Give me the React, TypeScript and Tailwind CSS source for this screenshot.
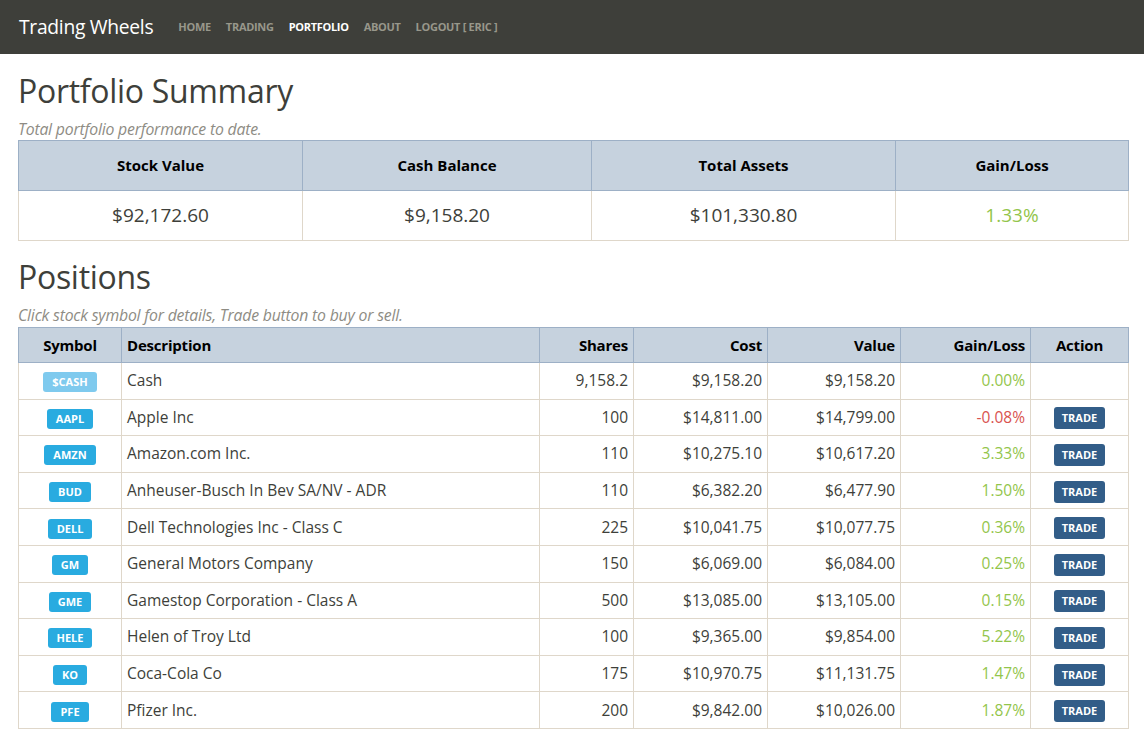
import React from 'react'

type Position = {
  symbol: string
  description: string
  shares: string
  cost: string
  value: string
  gain: string
  loss?: boolean
  cash?: boolean
}

const positions: Position[] = [
  { symbol: '$CASH', description: 'Cash', shares: '9,158.2', cost: '$9,158.20', value: '$9,158.20', gain: '0.00%', cash: true },
  { symbol: 'AAPL', description: 'Apple Inc', shares: '100', cost: '$14,811.00', value: '$14,799.00', gain: '-0.08%', loss: true },
  { symbol: 'AMZN', description: 'Amazon.com Inc.', shares: '110', cost: '$10,275.10', value: '$10,617.20', gain: '3.33%' },
  { symbol: 'BUD', description: 'Anheuser-Busch In Bev SA/NV - ADR', shares: '110', cost: '$6,382.20', value: '$6,477.90', gain: '1.50%' },
  { symbol: 'DELL', description: 'Dell Technologies Inc - Class C', shares: '225', cost: '$10,041.75', value: '$10,077.75', gain: '0.36%' },
  { symbol: 'GM', description: 'General Motors Company', shares: '150', cost: '$6,069.00', value: '$6,084.00', gain: '0.25%' },
  { symbol: 'GME', description: 'Gamestop Corporation - Class A', shares: '500', cost: '$13,085.00', value: '$13,105.00', gain: '0.15%' },
  { symbol: 'HELE', description: 'Helen of Troy Ltd', shares: '100', cost: '$9,365.00', value: '$9,854.00', gain: '5.22%' },
  { symbol: 'KO', description: 'Coca-Cola Co', shares: '175', cost: '$10,970.75', value: '$11,131.75', gain: '1.47%' },
  { symbol: 'PFE', description: 'Pfizer Inc.', shares: '200', cost: '$9,842.00', value: '$10,026.00', gain: '1.87%' },
]

const navLinks = ['HOME', 'TRADING', 'PORTFOLIO', 'ABOUT', 'LOGOUT [ ERIC ]']

const th = 'border border-[#9db0c6] bg-[#c6d2de] font-bold text-black'
const td = 'border border-[#dfd7ca]'

function Navbar() {
  return (
    <nav className="flex h-[54px] items-center bg-[#3e3f3a] pl-[19px]">
      <span className="mr-[25px] text-[19.3px] tracking-[-0.3px] text-white">Trading Wheels</span>
      <div className="flex gap-[15px] pt-[1px]">
        {navLinks.map((l) => (
          <span
            key={l}
            className={
              'text-[11px] font-bold tracking-[-0.3px] ' +
              (l === 'PORTFOLIO' ? 'text-white' : 'text-[#98978b]')
            }
          >
            {l}
          </span>
        ))}
      </div>
    </nav>
  )
}

function SectionHead({ title, sub }: { title: string; sub: string }) {
  return (
    <>
      <h1 className="text-[32px] leading-[38px] tracking-[-0.3px] text-[#3e3f3a]">{title}</h1>
      <p className="mt-[9px] text-[15.8px] italic leading-[20px] tracking-[-0.2px] text-[#8e8c84]">{sub}</p>
    </>
  )
}

function Summary() {
  return (
    <table className="mt-[1px] w-[1110px] table-fixed border-collapse text-center">
      <colgroup>
        <col className="w-[284px]" />
        <col className="w-[289px]" />
        <col className="w-[304px]" />
        <col className="w-[233px]" />
      </colgroup>
      <thead>
        <tr className="h-[50px] text-[15px]">
          <th className={th}>Stock Value</th>
          <th className={th}>Cash Balance</th>
          <th className={th}>Total Assets</th>
          <th className={th}>Gain/Loss</th>
        </tr>
      </thead>
      <tbody>
        <tr className="h-[50px] text-[19px] text-[#3e3f3a]">
          <td className={td}>$92,172.60</td>
          <td className={td}>$9,158.20</td>
          <td className={td}>$101,330.80</td>
          <td className={td + ' text-[#93c54b]'}>1.33%</td>
        </tr>
      </tbody>
    </table>
  )
}

function Positions() {
  return (
    <table className="mt-[2px] w-[1110px] table-fixed border-collapse text-[15.5px] text-[#3e3f3a]">
      <colgroup>
        <col className="w-[103px]" />
        <col className="w-[418px]" />
        <col className="w-[94px]" />
        <col className="w-[134px]" />
        <col className="w-[133px]" />
        <col className="w-[130px]" />
        <col className="w-[98px]" />
      </colgroup>
      <thead>
        <tr className="h-[35px] text-[15px] tracking-[-0.2px]">
          <th className={th + ' text-center'}>Symbol</th>
          <th className={th + ' pl-[5px] text-left'}>Description</th>
          <th className={th + ' pr-[5px] text-right'}>Shares</th>
          <th className={th + ' pr-[5px] text-right'}>Cost</th>
          <th className={th + ' pr-[5px] text-right'}>Value</th>
          <th className={th + ' pr-[5px] text-right'}>Gain/Loss</th>
          <th className={th + ' text-center'}>Action</th>
        </tr>
      </thead>
      <tbody>
        {positions.map((p) => (
          <tr key={p.symbol} className="h-[36.6px]">
            <td className={td + ' text-center'}>
              <span
                className={
                  'inline-block rounded-[3px] px-[9px] py-[3px] text-[11px] font-bold leading-[14px] text-white ' +
                  (p.cash ? 'bg-[#7fcaee]' : 'bg-[#29abe0]')
                }
              >
                {p.symbol}
              </span>
            </td>
            <td className={td + ' pl-[5px]'}>{p.description}</td>
            <td className={td + ' pr-[5px] text-right'}>{p.shares}</td>
            <td className={td + ' pr-[5px] text-right'}>{p.cost}</td>
            <td className={td + ' pr-[5px] text-right'}>{p.value}</td>
            <td className={td + ' pr-[5px] text-right ' + (p.loss ? 'text-[#d9534f]' : 'text-[#93c54b]')}>
              {p.gain}
            </td>
            <td className={td + ' text-center'}>
              {!p.cash && (
                <span className="inline-block rounded-[3px] bg-[#325d88] px-[8px] py-[4px] text-[11px] font-bold leading-[14px] text-white">
                  TRADE
                </span>
              )}
            </td>
          </tr>
        ))}
      </tbody>
    </table>
  )
}

export default function App() {
  return (
    <div className="min-h-[739px] bg-white font-['Open_Sans',sans-serif]">
      <Navbar />
      <main className="px-[18px] pt-[18px]">
        <SectionHead title="Portfolio Summary" sub="Total portfolio performance to date." />
        <Summary />
        <div className="mt-[17px]">
          <SectionHead title="Positions" sub="Click stock symbol for details, Trade button to buy or sell." />
        </div>
        <Positions />
      </main>
    </div>
  )
}
